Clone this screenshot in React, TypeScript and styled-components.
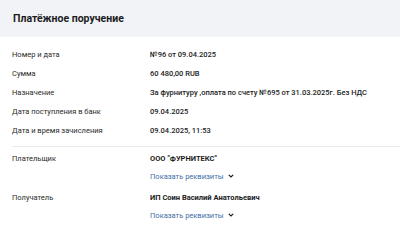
import React from "react";
import styled, { createGlobalStyle } from "styled-components";

const Global = createGlobalStyle`
  html, body { margin: 0; padding: 0; background: #ffffff; }
  body { font-family: Roboto, "Noto Sans", sans-serif; color: #1f1f1f; width: 400px; height: 250px; overflow: hidden; }
`;

const Page = styled.div`
  display: flex;
  flex-direction: column;
  width: 400px;
`;

const Header = styled.div`
  height: 37px;
  background: #f2f3f7;
  display: flex;
  align-items: center;
  padding: 0 13px;
  box-sizing: border-box;
`;

const Title = styled.h1`
  margin: 0;
  font-size: 10.5px;
  font-weight: 700;
  color: #1c1c1e;
`;

const Section = styled.div`
  display: flex;
  flex-direction: column;
  padding: 8px 12px 0;
`;

const Row = styled.div<{ $h?: number; $mb?: number }>`
  display: grid;
  grid-template-columns: 138px 1fr;
  align-items: center;
  height: ${(p) => p.$h ?? 19}px;
  margin-bottom: ${(p) => p.$mb ?? 0}px;
`;

const Label = styled.div`
  font-size: 7.5px;
  color: #2b2b2b;
`;

const Value = styled.div<{ $bold?: boolean }>`
  font-size: 7.5px;
  color: #1c1c1c;
  font-weight: ${(p) => (p.$bold ? 700 : 500)};
  white-space: nowrap;
`;

const Divider = styled.div`
  height: 1px;
  background: #e8e9ee;
  margin: 6px 0 0 12px;
`;

const Party = styled.div`
  display: flex;
  flex-direction: column;
  padding: 2px 12px 0;
`;

const Link = styled.span`
  display: inline-flex;
  align-items: center;
  gap: 4px;
  font-size: 7.5px;
  color: #3f6ea8;
`;

const Chevron = () => (
  <svg width="6" height="4" viewBox="0 0 6 4">
    <path d="M0.8 0.8 L3 3 L5.2 0.8" fill="none" stroke="#1c1c1e" strokeWidth="1.2" />
  </svg>
);

const rows: [string, string][] = [
  ["Номер и дата", "№96 от 09.04.2025"],
  ["Сумма", "60 480,00 RUB"],
  ["Назначение", "За фурнитуру ,оплата по счету №695 от 31.03.2025г. Без НДС"],
  ["Дата поступления в банк", "09.04.2025"],
  ["Дата и время зачисления", "09.04.2025, 11:53"],
];

export default function App() {
  return (
    <Page>
      <Global />
      <Header>
        <Title>Платёжное поручение</Title>
      </Header>
      <Section>
        {rows.map(([l, v]) => (
          <Row key={l}>
            <Label>{l}</Label>
            <Value>{v}</Value>
          </Row>
        ))}
      </Section>
      <Divider />
      <Party>
        <Row $h={18}>
          <Label>Плательщик</Label>
          <Value $bold>ООО "ФУРНИТЕКС"</Value>
        </Row>
        <Row $h={18} $mb={3}>
          <span />
          <Link>Показать реквизиты <Chevron /></Link>
        </Row>
        <Row $h={18}>
          <Label>Получатель</Label>
          <Value $bold>ИП Соин Василий Анатольевич</Value>
        </Row>
        <Row $h={18}>
          <span />
          <Link>Показать реквизиты <Chevron /></Link>
        </Row>
      </Party>
    </Page>
  );
}
